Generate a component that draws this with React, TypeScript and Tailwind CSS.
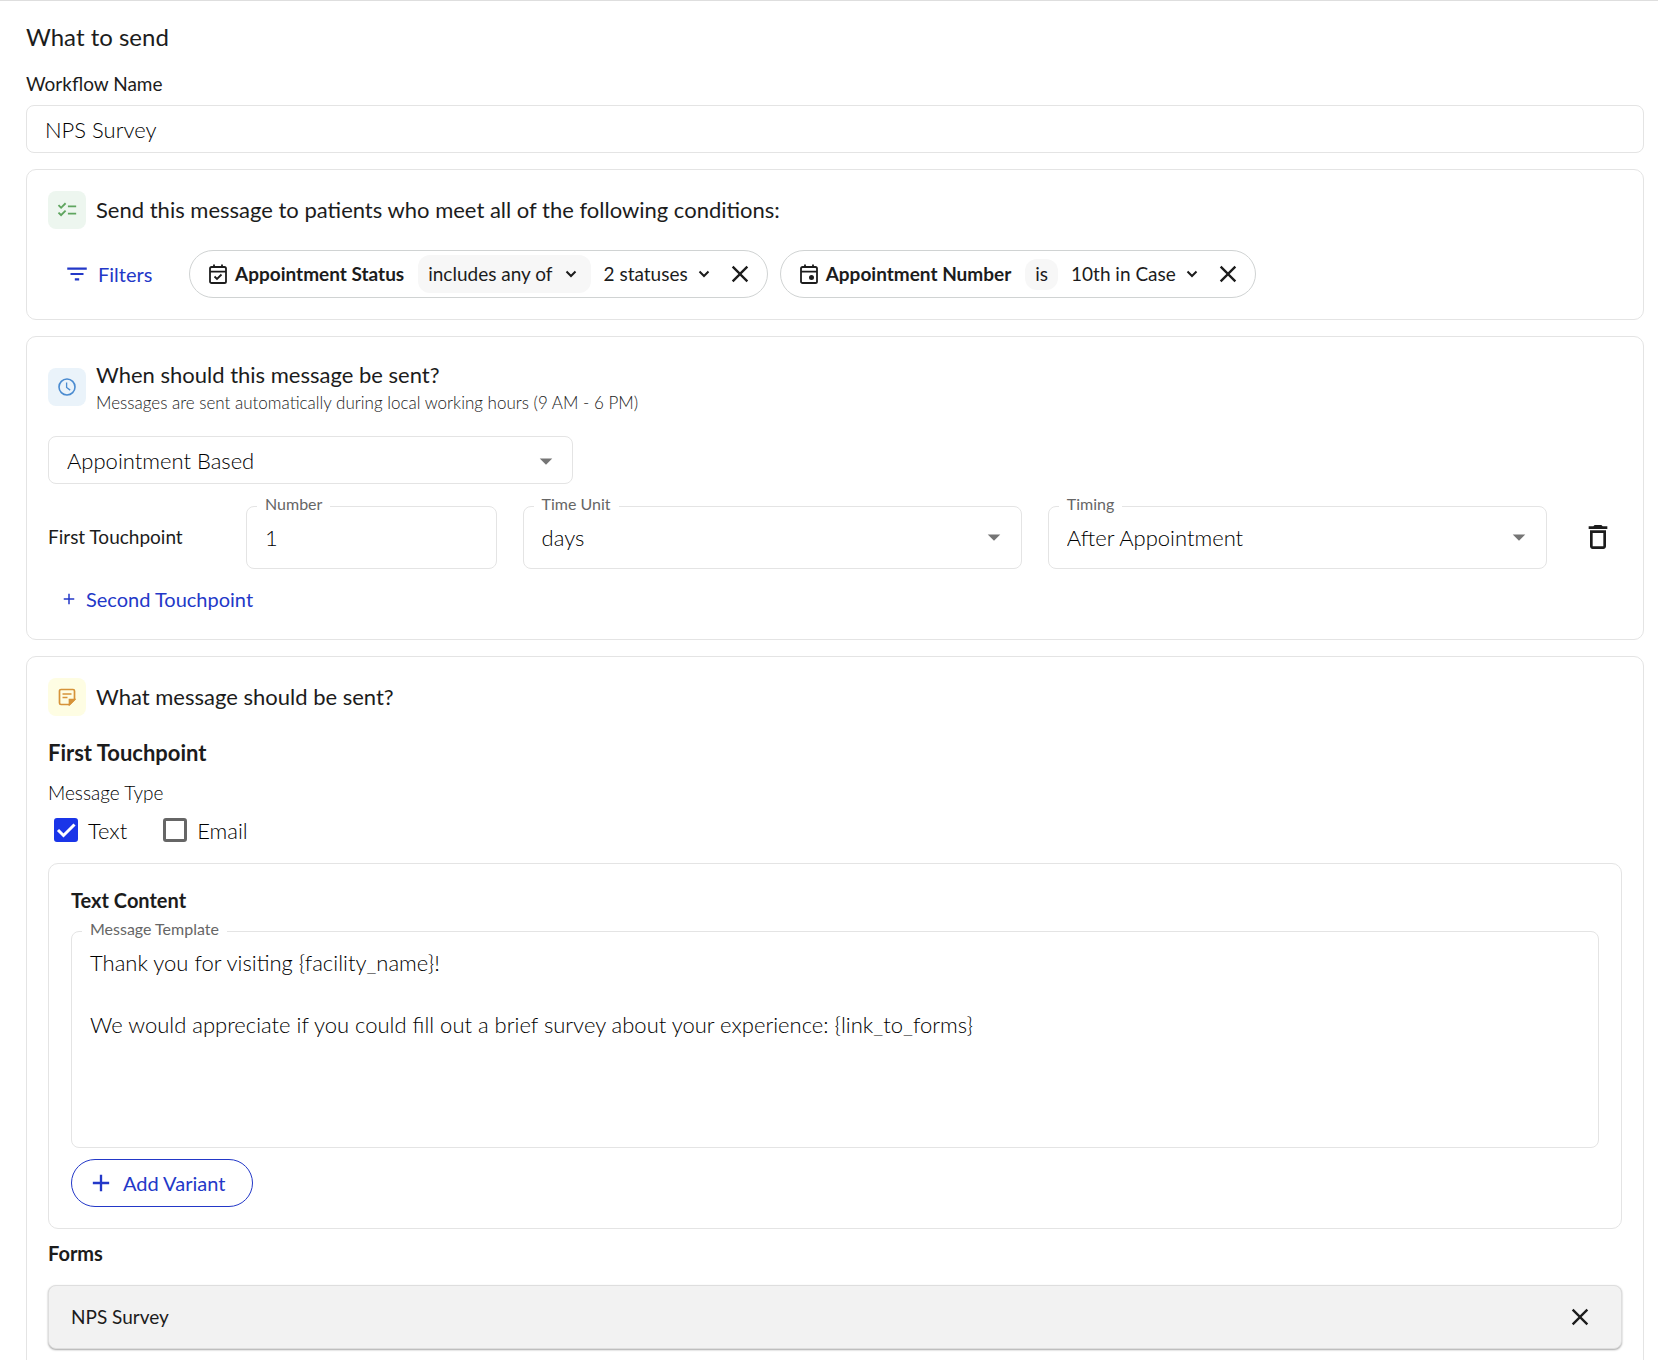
import { useState, type ReactNode } from "react";
import {
  MdAdd,
  MdArrowDropDown,
  MdChecklist,
  MdClose,
  MdFilterList,
  MdOutlineDelete,
} from "react-icons/md";

function Card(props: { children: ReactNode; className?: string }) {
  return (
    <section className={`rounded-[10px] border border-[#e4e4e4] ${props.className ?? ""}`}>
      {props.children}
    </section>
  );
}

function IconTile(props: { children: ReactNode; className: string }) {
  return (
    <span className={`flex size-[38px] shrink-0 items-center justify-center rounded-lg ${props.className}`}>
      {props.children}
    </span>
  );
}

function Chevron() {
  return (
    <svg viewBox="0 0 12 8" className="w-3" fill="none" stroke="currentColor" strokeWidth="2">
      <path d="M1.5 1.5 6 6l4.5-4.5" />
    </svg>
  );
}

function CalendarIcon(props: { children: ReactNode }) {
  return (
    <svg viewBox="0 0 18 20" className="w-[18px] shrink-0" fill="none" stroke="currentColor" strokeWidth="1.8">
      <rect x="1" y="3" width="16" height="16" rx="1.6" />
      <path d="M1 7.6h16M5 .4V3M13 .4V3" />
      {props.children}
    </svg>
  );
}

function ClockIcon() {
  return (
    <svg viewBox="0 0 18 18" className="w-[18px]" fill="none" stroke="currentColor" strokeWidth="1.6">
      <circle cx="9" cy="9" r="8" />
      <path d="M8.6 4.5v5l3.6 2.6" strokeWidth="1.3" />
    </svg>
  );
}

function NoteIcon() {
  return (
    <svg viewBox="0 0 18 18" className="w-[18px]" fill="none" stroke="currentColor" strokeWidth="1.7">
      <path d="M11.5 16.5H3A1.5 1.5 0 0 1 1.5 15V3A1.5 1.5 0 0 1 3 1.5h12A1.5 1.5 0 0 1 16.5 3v8.5z" />
      <path d="M4.500 6h9M4.500 9.500h5" />
      <path d="M11.500 16.500v-5h5z" fill="currentColor" />
    </svg>
  );
}

function CheckBox(props: { checked: boolean; onChange: (v: boolean) => void }) {
  return (
    <span className="relative flex size-6">
      <input
        type="checkbox"
        checked={props.checked}
        onChange={(e) => props.onChange(e.target.checked)}
        className="size-6 appearance-none rounded-[3px] border-[3px] border-[#666] checked:border-[#1a35e8] checked:bg-[#1a35e8]"
      />
      {props.checked && (
        <svg viewBox="0 0 24 24" className="pointer-events-none absolute inset-0" fill="none" stroke="white" strokeWidth="3">
          <path d="m4 12 5.500 5.500L20.500 6.500" />
        </svg>
      )}
    </span>
  );
}

function Outlined(props: { id: string; label: string; children: ReactNode; className?: string }) {
  return (
    <fieldset className={`relative min-w-0 rounded-lg border border-[#e4e4e4] ${props.className ?? ""}`}>
      <legend className="ml-2.5 px-2 pb-1 text-base leading-4 text-[#666]">
        <label htmlFor={props.id}>{props.label}</label>
      </legend>
      {props.children}
    </fieldset>
  );
}

function OutlinedSelect(props: { id: string; label: string; options: string[]; className?: string }) {
  return (
    <Outlined id={props.id} label={props.label} className={props.className}>
      <select id={props.id} className="h-[52px] w-full appearance-none px-[18px] pb-2.5 text-[22px] font-light text-black outline-none">
        {props.options.map((o) => (
          <option key={o}>{o}</option>
        ))}
      </select>
      <MdArrowDropDown className="pointer-events-none absolute right-3 top-1.5 size-[30px] text-[#757575]" />
    </Outlined>
  );
}

function App() {
  const [name, setName] = useState("NPS Survey");
  const [amount, setAmount] = useState("1");
  const [text, setText] = useState(true);
  const [email, setEmail] = useState(false);
  const [template, setTemplate] = useState(
    "Thank you for visiting {facility_name}!\n\nWe would appreciate if you could fill out a brief survey about your experience: {link_to_forms}"
  );

  return (
    <main className="border-t border-[#dedede] bg-white pr-3.5 pb-4 pl-[26px] font-[Lato,sans-serif] text-[#1c1c1c]">
      <h1 className="pt-[18px] text-2xl leading-9">What to send</h1>
      <label htmlFor="workflow" className="mt-[13px] block text-[19px] leading-8">Workflow Name</label>
      <input
        id="workflow"
        value={name}
        onChange={(e) => setName(e.target.value)}
        className="mt-[5px] block h-12 w-full rounded-lg border border-[#e4e4e4] px-[18px] text-[22px] font-light text-black outline-none"
      />

      <Card className="mt-4 px-[21px] py-[21px]">
        <div className="flex items-center gap-2.5">
          <IconTile className="bg-[#edf6ef] text-[#5fa55f]"><MdChecklist className="size-[22px]" /></IconTile>
          <h2 className="text-[22px] leading-8">Send this message to patients who meet all of the following conditions:</h2>
        </div>
        <div className="mt-[21px] flex items-center">
          <button className="flex h-12 w-[141px] items-center gap-2 pl-4 text-xl text-[#2338c8]">
            <MdFilterList className="size-[26px]" />
            Filters
          </button>
          <div className="flex h-12 items-center rounded-full border border-[#d0d3d3] pr-[13px] pl-[19px] text-[19px]">
            <CalendarIcon><path d="m5.500 12.500 2.500 2.500 4.500-4.500" /></CalendarIcon>
            <span className="ml-2 font-bold">Appointment Status</span>
            <button className="ml-3.5 flex h-[38px] items-center gap-3 rounded-xl bg-[#f7f7f7] pr-3.5 pl-2.5">includes any of <Chevron /></button>
            <button className="ml-[13px] flex items-center gap-2.5">2 statuses <Chevron /></button>
            <button aria-label="Remove appointment status" className="ml-4"><MdClose className="size-7" /></button>
          </div>
          <div className="ml-3 flex h-12 items-center rounded-full border border-[#d0d3d3] pr-[13px] pl-[19px] text-[19px]">
            <CalendarIcon><circle cx="11.500" cy="13.500" r="1.600" fill="currentColor" /></CalendarIcon>
            <span className="ml-2 font-bold">Appointment Number</span>
            <span className="ml-3.5 flex h-[31px] items-center rounded-xl bg-[#f7f7f7] px-2.5">is</span>
            <button className="ml-[13px] flex items-center gap-2.5">10th in Case <Chevron /></button>
            <button aria-label="Remove appointment number" className="ml-4"><MdClose className="size-7" /></button>
          </div>
        </div>
      </Card>

      <Card className="mt-4 px-[21px] pt-[22px] pb-5">
        <div className="flex items-center gap-2.5">
          <IconTile className="bg-[#eaf3fa] text-[#4a8bd0]"><ClockIcon /></IconTile>
          <div>
            <h2 className="text-[22px] leading-8">When should this message be sent?</h2>
            <p className="text-[17px] leading-6 font-light text-[#222]">Messages are sent automatically during local working hours (9 AM - 6 PM)</p>
          </div>
        </div>
        <div className="relative mt-[21px] w-1/3">
          <select aria-label="Schedule type" className="h-12 w-full appearance-none rounded-lg border border-[#e4e4e4] px-[18px] text-[22px] font-light text-black outline-none">
            <option>Appointment Based</option>
          </select>
          <MdArrowDropDown className="pointer-events-none absolute right-3 top-2.5 size-[30px] text-[#757575]" />
        </div>
        <div className="mt-3 flex">
          <div className="flex w-[198px] shrink-0 items-center pt-2.5 text-[19px]">First Touchpoint</div>
          <Outlined id="amount" label="Number" className="flex-[1]">
            <input id="amount" value={amount} onChange={(e) => setAmount(e.target.value)} className="h-[52px] w-full px-[18px] pb-2.5 text-[22px] font-light text-black outline-none" />
          </Outlined>
          <OutlinedSelect id="unit" label="Time Unit" options={["days", "hours", "weeks"]} className="ml-[26px] flex-[2]" />
          <OutlinedSelect id="timing" label="Timing" options={["After Appointment", "Before Appointment"]} className="ml-[26px] flex-[2]" />
          <button aria-label="Delete touchpoint" className="flex w-[75px] shrink-0 items-center justify-end pt-2 pr-2">
            <MdOutlineDelete className="size-8" />
          </button>
        </div>
        <button className="mt-2.5 ml-3 flex h-10 items-center gap-2 text-xl text-[#2338c8]">
          <MdAdd className="size-[18px]" />
          Second Touchpoint
        </button>
      </Card>

      <Card className="mt-4 px-[21px] pt-[21px] pb-[22px]">
        <div className="flex items-center gap-2.5">
          <IconTile className="bg-[#fefde3] text-[#d69339]"><NoteIcon /></IconTile>
          <h2 className="text-[22px] leading-8">What message should be sent?</h2>
        </div>
        <h3 className="mt-[21px] text-[22px] leading-8 font-bold">First Touchpoint</h3>
        <p className="mt-3 text-[19px] leading-6 font-light text-black">Message Type</p>
        <div className="mt-2 ml-1.5 flex h-[34px] items-center gap-9 text-[22px] font-light text-black">
          <label className="flex items-center gap-2.5">
            <CheckBox checked={text} onChange={setText} />
            Text
          </label>
          <label className="flex items-center gap-2.5">
            <CheckBox checked={email} onChange={setEmail} />
            Email
          </label>
        </div>

        <Card className="mt-4 px-[22px] pt-5 pb-[21px]">
          <h4 className="text-xl leading-8 font-bold">Text Content</h4>
          <Outlined id="template" label="Message Template" className="mt-[5px]">
            <textarea
              id="template"
              value={template}
              onChange={(e) => setTemplate(e.target.value)}
              className="block h-[206px] w-full resize-none px-[18px] pt-1.5 text-[22px] leading-[31px] font-light text-black outline-none"
            />
          </Outlined>
          <button className="mt-[11px] flex h-12 items-center gap-2 rounded-full border border-[#2338c8] pr-[27px] pl-[15px] text-xl text-[#2338c8]">
            <MdAdd className="size-7" />
            Add Variant
          </button>
        </Card>

        <h4 className="mt-2 text-xl leading-8 font-bold">Forms</h4>
        <div className="mt-4 flex h-16 items-center justify-between rounded-lg border border-[#dedede] bg-[#f2f2f2] pr-[27px] pl-[22px] text-[19px] shadow-[0_1px_2px_rgba(0,0,0,0.35)]">
          NPS Survey
          <button aria-label="Remove form"><MdClose className="size-7" /></button>
        </div>
      </Card>
    </main>
  );
}

export default App;
